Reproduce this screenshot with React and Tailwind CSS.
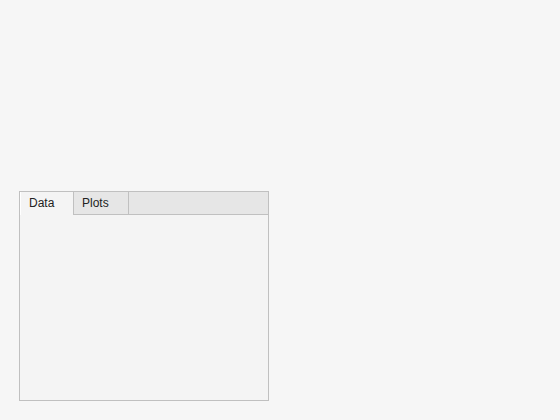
import React, { useState } from "react";

const tabs = ["Data", "Plots"];

function TabPanel() {
  const [active, setActive] = useState("Data");

  return (
    <div className="w-[250px] h-[210px] border border-[#c0c0c0] bg-[#f4f4f4] flex flex-col">
      <div className="flex h-[23px]">
        {tabs.map((t) => (
          <button
            key={t}
            onClick={() => setActive(t)}
            className={
              t === active
                ? "w-[54px] h-[23px] pl-[8px] pt-[4px] flex items-start text-[12px] leading-[14px] text-[#222] bg-[#f4f4f4] border-r border-[#c0c0c0] border-l border-l-white"
                : "w-[55px] h-[23px] pl-[8px] pt-[4px] flex items-start text-[12px] leading-[14px] text-[#222] bg-[#e6e6e6] border-r border-b border-[#c0c0c0]"
            }
          >
            {t}
          </button>
        ))}
        <div className="flex-1 bg-[#e6e6e6] border-b border-[#c0c0c0]" />
      </div>
      <div className="flex-1" />
    </div>
  );
}

export default function App() {
  return (
    <div
      className="w-[560px] h-[420px] bg-[#f6f6f6] pt-[191px] pl-[19px]"
      style={{ fontFamily: '"Liberation Sans", Arial, sans-serif' }}
    >
      <TabPanel />
    </div>
  );
}
